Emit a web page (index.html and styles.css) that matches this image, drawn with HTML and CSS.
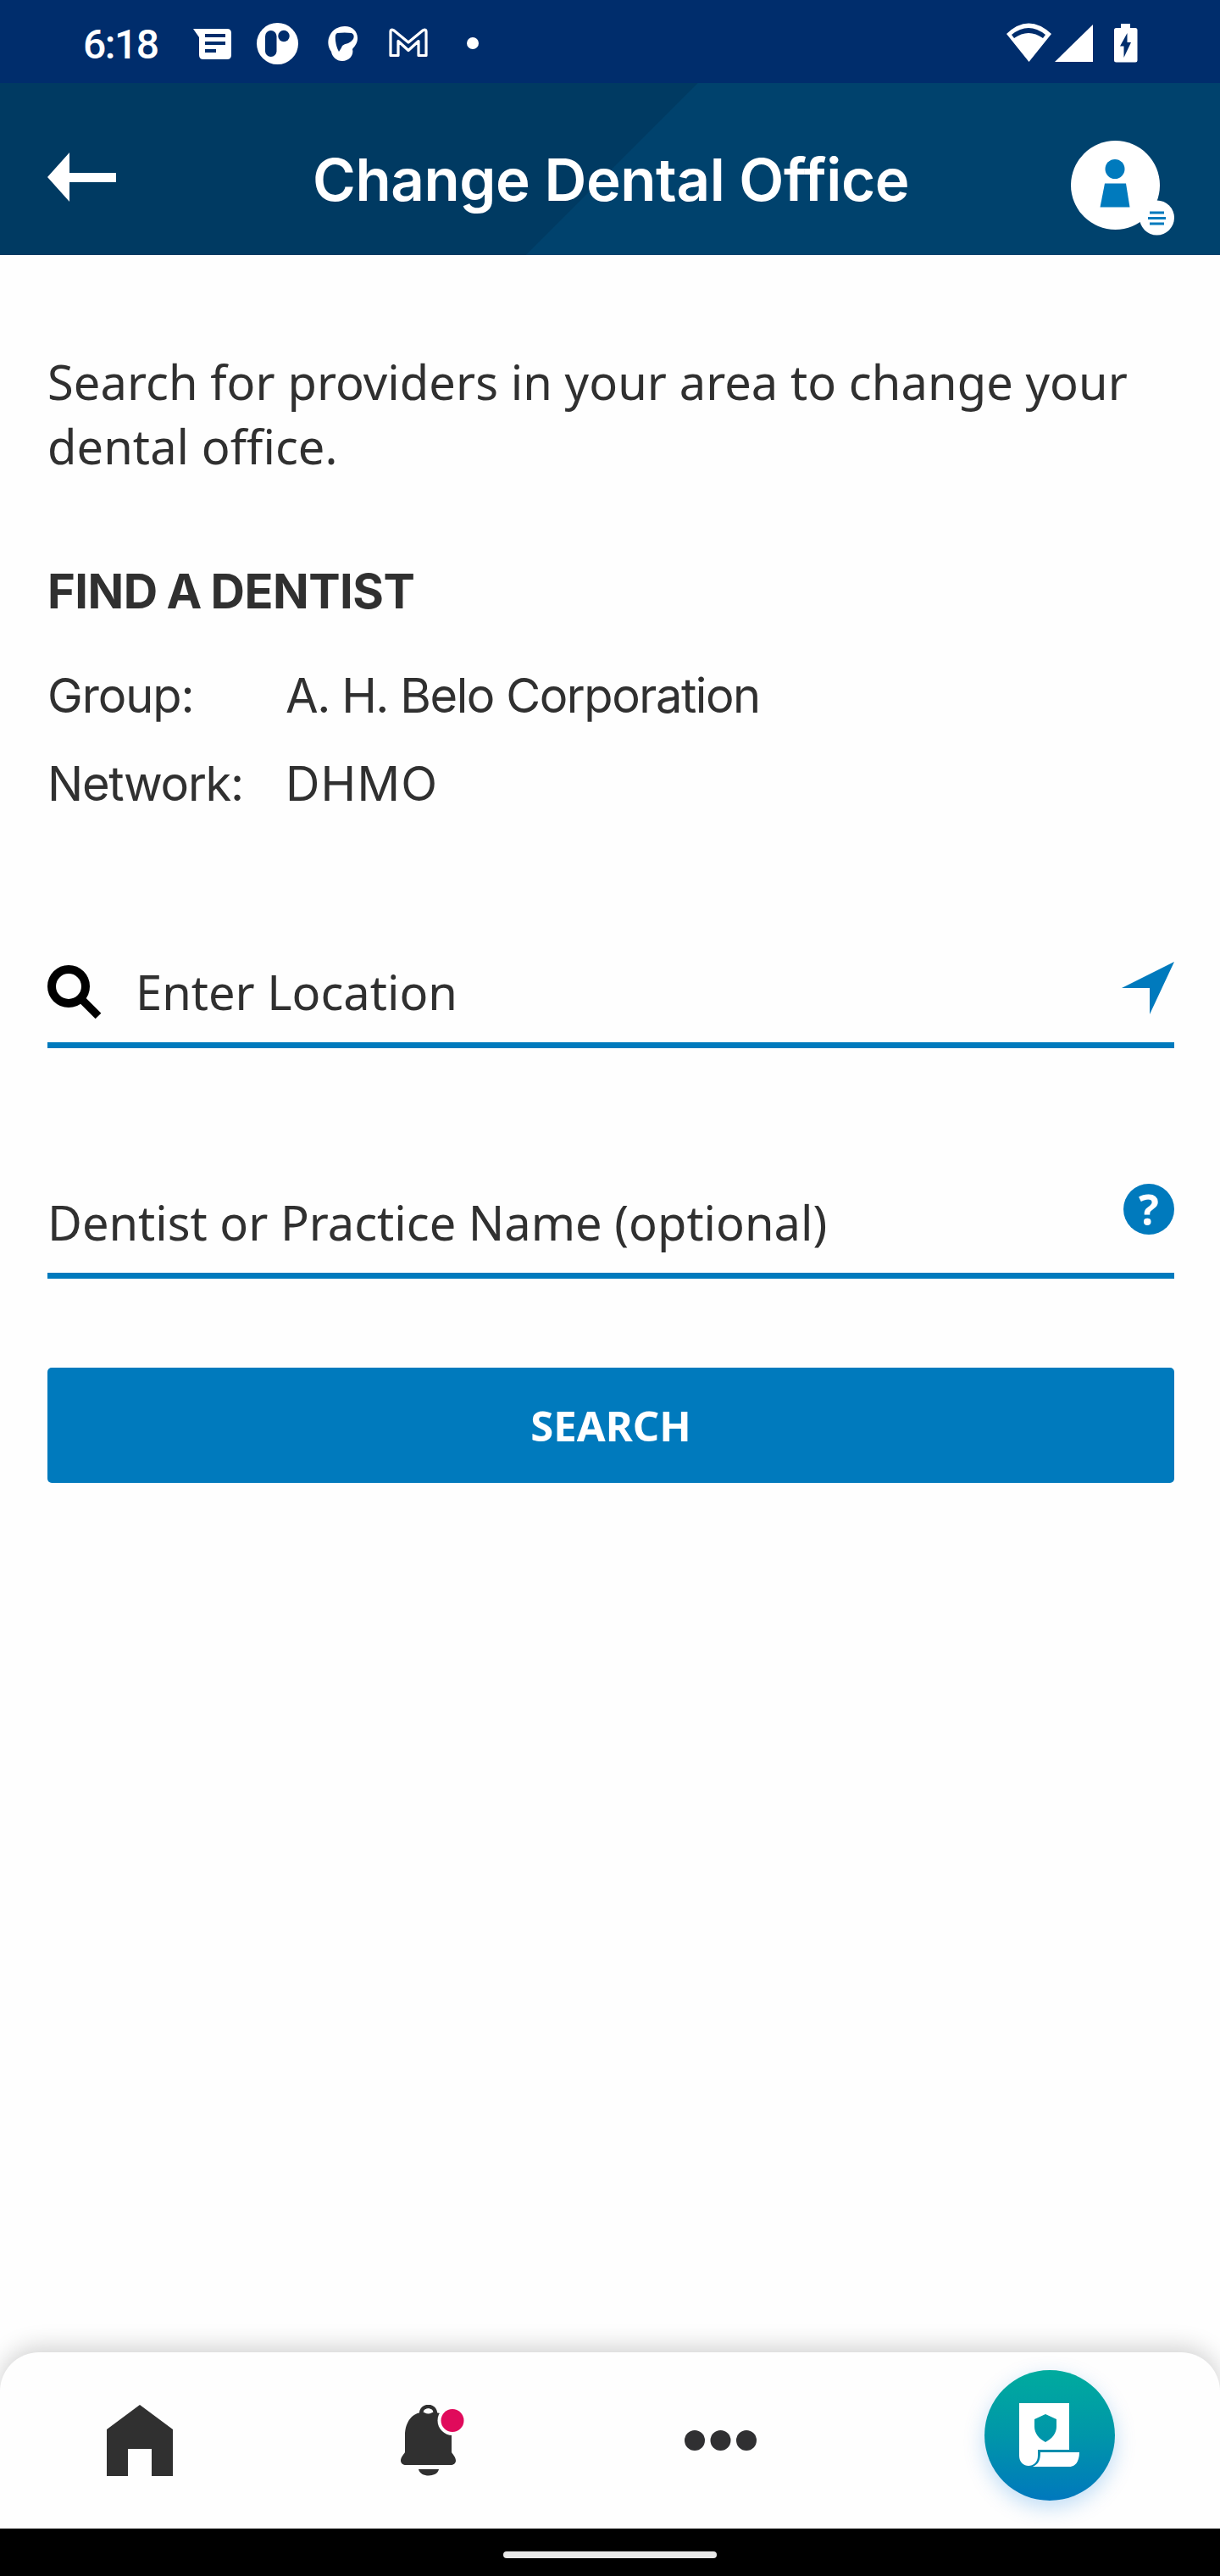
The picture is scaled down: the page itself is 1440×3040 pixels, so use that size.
FILE: index.html
```html
<!DOCTYPE html>
<html lang="en">
<head>
<meta charset="utf-8">
<title>Change Dental Office</title>
<link rel="stylesheet" href="styles.css">
</head>
<body>
<div class="status">
  <span class="time">6:18</span>
  <svg class="notifs" width="340" height="72" viewBox="228 14 340 72">
    <path fill="#fff" d="M228 34h40q5 0 5 5v26q0 5-5 5h-28q-5 0-5-5V44z"/>
    <path stroke="#002d6c" stroke-width="4" d="M242 42h24M242 51h24M242 60h13"/>
    <circle cx="327.500" cy="51.500" r="24.500" fill="#fff"/>
    <rect x="313" y="36" width="13.500" height="31" rx="6.700" fill="#002d6c"/>
    <circle cx="335" cy="42.500" r="6.700" fill="#002d6c"/>
    <path fill="#fff" fill-rule="evenodd" d="M407 31c9 0 15 6 15 14 0 6-3 9-6 13 2 7-4 14-12 14-7 0-12-5-13-11-9-13 0-30 16-30zM398 39q-3 1-2 9 1 8 4 13 3-4 4-7 2-2 7-3 4-2 6-5 2-5-2-7-8-1-17 0z"/>
    <path fill="none" stroke="#fff" stroke-width="3.200" stroke-linejoin="round" d="M461 65.500V37q0-3 4-1l17 14 17-14q4-2 4 1v28.500h-9V48.500l-12 11-12-11v17z"/>
    <circle cx="558" cy="51" r="7" fill="#fff"/>
  </svg>
  <svg class="system" width="156" height="50" viewBox="1188 26 156 50">
    <path fill="#fff" fill-rule="evenodd" d="M1188 40q26-25 53 0l-26.500 33zm6 1 3 4q17-12 34 0l3-4q-20-16-40 0z"/>
    <path fill="#fff" d="M1290 29v44h-45z"/>
    <path fill="#fff" d="M1323 28h11v5h6q2.500 0 2.500 2.500v35.500q0 2.500-2.500 2.500h-22.500q-2.500 0-2.500-2.500V35.500q0-2.500 2.500-2.500h5.500z"/>
    <path fill="#002d6c" d="M1330.500 39v11h4.500l-8.500 18V54.500h-4.500z"/>
  </svg>
</div>
<header class="header">
  <svg class="back" width="82" height="58" viewBox="0 0 82 58"><path fill="#fff" d="M0 29 26 0v24h55v11H26v23z"/></svg>
  <h1>Change Dental Office</h1>
  <svg class="profile" width="122" height="112" viewBox="0 0 122 112">
    <circle cx="52.500" cy="52.500" r="52.500" fill="#fff"/>
    <circle cx="52" cy="33.500" r="11.500" fill="#007abd"/>
    <path fill="#007abd" d="M40 50.500h25l4.500 28h-35z"/>
    <circle cx="101.500" cy="91" r="20.500" fill="#fff"/>
    <path stroke="#007abd" stroke-width="3" d="M93 85h17M91 91.500h21M93 98h17"/>
  </svg>
</header>
<main class="content">
  <p class="intro">Search for providers in your area to change your dental office.</p>
  <h2>FIND A DENTIST</h2>
  <dl class="details">
    <dt class="group">Group:</dt><dd class="corp">A. H. Belo Corporation</dd>
    <dt class="network">Network:</dt><dd class="dhmo">DHMO</dd>
  </dl>
  <div class="field location">
    <svg class="magnifier" width="64" height="64" viewBox="0 0 64 64"><circle cx="25" cy="25" r="20" fill="none" stroke="#000" stroke-width="10"/><path stroke="#000" stroke-width="9.500" d="m40 40 20 20"/></svg>
    <span class="label">Enter Location</span>
    <svg class="locate" width="62" height="63" viewBox="0 0 62 63"><path fill="#007abd" d="M62 0 33 62V31H0z"/></svg>
  </div>
  <div class="field practice">
    <span class="label">Dentist or Practice Name (optional)</span>
    <span class="help">?</span>
  </div>
  <button class="search">SEARCH</button>
</main>
<nav class="tabs">
  <svg class="home" width="78" height="84" viewBox="0 0 78 84"><path fill="#303030" d="M39 0 78 29v55H53V52H25v32H0V29z"/></svg>
  <svg class="bell" width="76" height="84" viewBox="0 0 76 84">
    <path fill="none" stroke="#303030" stroke-width="4.500" d="M24 14V11c0-12 17-12 17 0v3"/>
    <path fill="#303030" d="M5 56V36C5 20 14 9 26 9h13C53 9 60 20 60 36v20c2 3 5 6 5 10 0 3-3 5-6 5H6c-3 0-6-2-6-5 0-4 3-7 5-10zM21 76h24c-2 10-22 10-24 0z"/>
    <ellipse cx="32.500" cy="7.500" rx="5.500" ry="3" fill="#fff"/>
    <circle cx="61" cy="18.500" r="17.500" fill="#fefefe"/><circle cx="61" cy="18.500" r="13.500" fill="#e00a5b"/>
  </svg>
  <svg class="more" width="86" height="24" viewBox="0 0 86 24" fill="#303032"><circle cx="12" cy="12" r="12"/><circle cx="42.500" cy="12" r="12"/><circle cx="73" cy="12" r="12"/></svg>
  <div class="plan">
    <svg width="72" height="76" viewBox="0 0 72 76">
      <path fill="#fff" fill-rule="evenodd" d="M0 0h59v55H22v7c0 16-22 16-22 0zm31 13-13 6v9c0 7 5 14 13 18 8-4 13-11 13-18v-9z"/>
      <path fill="#fff" d="M25 58h46c0 10-4 17-12 17H16c7-3 9-8 9-17z"/>
    </svg>
  </div>
</nav>
<div class="gesture"><span></span></div>
</body>
</html>
```
FILE: styles.css
```css
* { box-sizing: border-box; }
body { margin: 0; width: 1440px; height: 3040px; display: flex; flex-direction: column; background: #fefefe; color: #303030; font-family: "Noto Sans", sans-serif; overflow: hidden; }
h1, h2, p, dl, dd { margin: 0; }
svg { display: block; flex: none; }
.status { height: 98px; background: #002d6c; display: flex; align-items: flex-start; padding: 14px 96px 0 98px; color: #fff; }
.time { width: 130px; font: 500 48px/78px Roboto, sans-serif; letter-spacing: -1.5px; }
.system { margin: 12px 0 0 auto; }
.header { height: 203px; display: flex; align-items: flex-start; padding: 68px 54px 0 56px; background: linear-gradient(135deg, #003a62 0 582px, #00426d 583px); color: #fff; }
.back { margin-top: 14px; }
h1 { width: 740px; margin: 0 0 0 231px; font: 600 69px/92px Inter, sans-serif; letter-spacing: -.4px; white-space: nowrap; }
.profile { margin-left: auto; }
.content { height: 2475px; padding: 111px 54px 0 56px; }
.intro { font-size: 56px; line-height: 76px; letter-spacing: .07px; }
h2 { margin-top: 84px; font: 700 56px/100px Inter, sans-serif; letter-spacing: -.5px; word-spacing: -2px; white-space: nowrap; }
.details { display: grid; grid-template-columns: 281px 1fr; grid-auto-rows: 104px; margin-top: 21px; font: 400 56px/104px Inter, sans-serif; white-space: nowrap; }
.group { letter-spacing: -1.1px; }
.network { letter-spacing: -1.3px; }
.corp { letter-spacing: -1.45px; }
.dhmo { letter-spacing: 1.2px; }
.field { display: flex; align-items: flex-start; border-bottom: 7px solid #007abd; font-size: 56px; line-height: 78px; white-space: nowrap; }
.location { height: 102px; margin-top: 158px; }
.magnifier { margin-top: 4px; }
.location .label { margin-left: 40px; margin-top: -4px; }
.locate { margin-left: auto; }
.practice { height: 112px; margin-top: 160px; }
.practice .label { padding-top: 6px; }
.help { width: 60px; height: 60px; margin-left: auto; border-radius: 50%; background: #007abd; color: #fff; font: 700 50px/60px "Open Sans", sans-serif; text-align: center; }
.search { display: block; width: 100%; height: 136px; margin-top: 105px; padding: 0; border: 0; border-radius: 5px; background: #007abd; color: #fff; font: 700 49px/136px "Noto Sans", sans-serif; }
.tabs { height: 208px; display: flex; align-items: flex-start; background: #fefefe; border-radius: 46px 46px 0 0; box-shadow: 0 -6px 28px rgba(0,0,0,.18); padding: 21px 124px 0 126px; }
.home { margin-top: 41px; }
.bell { margin: 41px 0 0 269px; }
.more { margin: 71px 0 0 259px; }
.plan { width: 154px; height: 154px; margin-left: auto; border-radius: 50%; background: linear-gradient(#00ab9e, #0096a9 50%, #0078bd); box-shadow: 0 8px 24px rgba(0,120,220,.25); padding: 39px 0 0 41px; }
.gesture { height: 56px; background: #000; display: flex; justify-content: center; padding-top: 27px; position: relative; }
.gesture span { width: 252px; height: 8px; border-radius: 4px; background: #e8e8e8; }
```
